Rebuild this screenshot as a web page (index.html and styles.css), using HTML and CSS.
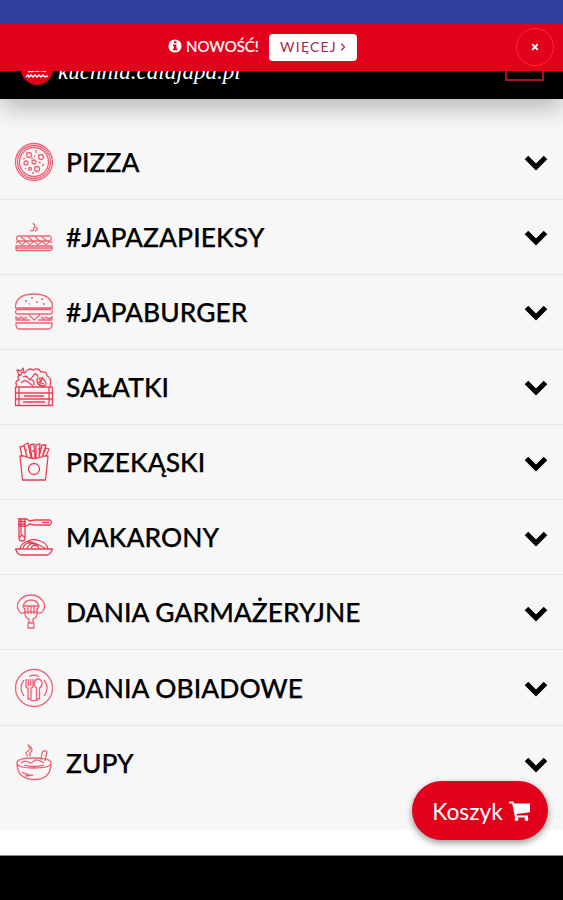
FILE: index.html
```html
<!DOCTYPE html>
<html lang="pl">
<head>
<meta charset="utf-8">
<title>Menu</title>
<link rel="stylesheet" href="styles.css">
</head>
<body>
<div class="status"></div>
<div class="notice">
  <svg class="info" viewBox="0 0 14 14"><circle cx="7" cy="7" r="6.6" fill="#fff"/><path d="M6 2.3h2.4v2H6zM5 5.4h3.4v4.2h1v1.7H4.900V9.600h1V7.100H5z" fill="#e2001a"/></svg>
  <span class="news">NOWOŚĆ!</span>
  <a class="more">WIĘCEJ <svg viewBox="0 0 6 8"><path d="M1.300 .8 4.600 4 1.300 7.200"/></svg></a>
  <span class="close"><svg viewBox="0 0 8 8"><path d="M1.200 1.200 6.800 6.800M6.800 1.200 1.200 6.800"/></svg></span>
</div>
<header class="header">
  <svg class="logo" viewBox="0 0 32 32"><circle cx="16" cy="16" r="16"/><path d="M7 18.500h5l2-1 2 1 3-1 6 1M5 24l2-2 1 2 2-2 2 2 2-2 2 2 2-2 2 2 2-2 2 2 3-1" stroke-width="1.500"/></svg>
  <span class="brand">kuchnia.calajapa.pl</span>
  <span class="burger"></span>
</header>
<main class="menu">
  <div class="row"><svg class="icon" viewBox="0 0 40 40"><circle cx="20" cy="20" r="18.500"/><circle cx="20" cy="20" r="16.500"/><circle cx="20" cy="20" r="14.500"/><circle cx="15" cy="13" r="2.500"/><circle cx="27" cy="15" r="2.500"/><circle cx="20" cy="20" r="2"/><circle cx="12" cy="21" r="2"/><circle cx="23" cy="27" r="2.500"/><circle cx="16" cy="27" r="1.500"/><path d="M22 8v3M9 17l2-1M17 17l2-1M24 20l3 1M30 22l-2 2M18 31h2M20 14l1 1M11 26l1 1"/></svg><span>PIZZA</span><svg class="chev" viewBox="0 0 26 18"><path d="M3.500 3.500l9.500 9.500 9.500-9.500"/></svg></div>
  <div class="row"><svg class="icon" viewBox="0 0 40 40"><path d="M4 19h32q2.500 2 0 5H4q-3-3 0-5zM2 26q2-3 4 0t4 0 4 0 4 0 4 0 4 0 4 0 4 0 4 0M2 29h36v3q0 1.500-2 1.500H4q-2 0-2-1.500zM2 31h36M7 20l5 4M14 20l5 4M21 20l5 4M28 20l5 4M16 13q3 2 4-1M19 6q4 4 0 6M22 10q3 2-1 4"/></svg><span>#JAPAZAPIEKSY</span><svg class="chev" viewBox="0 0 26 18"><path d="M3.500 3.500l9.500 9.500 9.500-9.500"/></svg></div>
  <div class="row"><svg class="icon" viewBox="0 0 40 40"><path d="M1.500 16C1 7 8 2 20 2s19 5 18.500 14zM3 17.500h34q3 2 0 4.500H3q-3-2 0-4.500zM2 25q2 3 5 0 3 3 6 0M15 23l5 5 6-5M27 25q3 3 5 0 3 3 6 0M2 24v4h14M24 28h14v-4M2 31h36v2q0 4-4 4H6q-4 0-4-4zM11 9h2M17 6h2M22 10h2M27 7h2M15 12h1M29 12h2"/></svg><span>#JAPABURGER</span><svg class="chev" viewBox="0 0 26 18"><path d="M3.500 3.500l9.500 9.500 9.500-9.500"/></svg></div>
  <div class="row"><svg class="icon strong" viewBox="0 0 40 40"><path d="M1.500 20h37v18.500h-37zM1.500 26h37M1.500 32h37M5 20v18M35 20v18M3 19q-3-5 2-6-3-5 2-5 0-4 4-2 3-6 8-3 5-3 8 2 6-1 6 4 5 2 3 10M5 8L3 3l4 1 2-3 1 4M9 10q3-2 5 1t5-2 5 1M7 16q3-4 7-1t5 4M15 13q5-2 5 5M23 12q5-3 8 2t-3 5q-5-1-5-5zM26 12v7M24 15l6 2M29 10l-4 8M10 29h20M9 35h22"/></svg><span>SAŁATKI</span><svg class="chev" viewBox="0 0 26 18"><path d="M3.500 3.500l9.500 9.500 9.500-9.500"/></svg></div>
  <div class="row"><svg class="icon strong" viewBox="0 0 40 40"><path d="M6 14h4q10 5 20 0h4l-2.500 24h-23zM8 14L6 5l4-1 3 11M13 15L10 3l4-2 3 15M18 16L16 3l4-1 1 14M22 16V3l4-1-1 13M25 15l3-12h4l-4 12M29 13l3-7 3 1-3 7M12 8h1M18 9h2M24 7h1"/><circle cx="20" cy="27" r="5.500"/></svg><span>PRZEKĄSKI</span><svg class="chev" viewBox="0 0 26 18"><path d="M3.500 3.500l9.500 9.500 9.500-9.500"/></svg></div>
  <div class="row"><svg class="icon strong" viewBox="0 0 40 40"><path d="M4 2h8q2 0 3 2l6-1h15q3 2.500 0 5H21l-6-1q-1 2-3 2H4M4 4.500h8M4 7h8M5 1v20q0 3 3 3t3-3l-3-3-3 3M7 1v17M11 1v20M1.500 32h37q-2 6-6 6h-25q-4 0-6-6zM6 32q1-6 8-8 6-3 12 0 7 2 8 8M9 31q2-6 8-5t8 5M13 31q4-7 10-4t8 4M17 31q2-4 7-2M14 25q5-1 8 3M28 5.500h7"/></svg><span>MAKARONY</span><svg class="chev" viewBox="0 0 26 18"><path d="M3.500 3.500l9.500 9.500 9.500-9.500"/></svg></div>
  <div class="row"><svg class="icon" viewBox="0 0 40 40"><path d="M7 21q-5-4-3-10Q8 3 17 3t13 8q2 6-3 10-4 1-4-3l2-4Q23 8 17 8T9 14l2 4q0 4-4 3zM10 14h14M11 16v5q0 5 4 6v4h-1v5h6v-5h-1v-4q4-1 4-6v-5M14 14v8M17 14v8M20 14v8M15 31h4M10 20h14"/></svg><span>DANIA GARMAŻERYJNE</span><svg class="chev" viewBox="0 0 26 18"><path d="M3.500 3.500l9.500 9.500 9.500-9.500"/></svg></div>
  <div class="row"><svg class="icon" viewBox="0 0 40 40"><circle cx="20" cy="20" r="18.500"/><path d="M15 8.500Q20 6 25 8.500M10 12Q4 20 10 28M30 12q6 8 0 16M16 32q4 1.500 8 0M12 11v7q0 2 2 2v11h3V20q2 0 2-2v-7M14.300 11v7M16.700 11v7M22.500 20v11h3V20q3-2 2.500-5-1-4-4-4t-4 4q0 3 2.500 5z"/></svg><span>DANIA OBIADOWE</span><svg class="chev" viewBox="0 0 26 18"><path d="M3.500 3.500l9.500 9.500 9.500-9.500"/></svg></div>
  <div class="row"><svg class="icon" viewBox="0 0 40 40"><path d="M3 20q0-5 17-5t17 5-17 5-17-5q0 15 15 16.500h5Q37 35 37 20M7 20q3-3 7-1t6-1 10 2M27 17l1-7q2-4 5-1l-2 9M14 13q-4-3 0-5t0-6q6 4 3 7t0 4M8 29q4 3 7 2M11 33l8-1M10 22q10 3 20 0"/></svg><span>ZUPY</span><svg class="chev" viewBox="0 0 26 18"><path d="M3.500 3.500l9.500 9.500 9.500-9.500"/></svg></div>
</main>
<footer class="footer"></footer>
<a class="cart">Koszyk <svg viewBox="0 0 22 20"><path d="M0 .5h4.500l.6 2H21v8.800L7.500 13l.4 1.500H19v2H6L3.200 2.500H0z"/><circle cx="7.500" cy="18" r="1.900"/><circle cx="17.500" cy="18" r="1.900"/></svg></a>
</body>
</html>
```
FILE: styles.css
```css
* { box-sizing: border-box; }
body { margin: 0; height: 900px; overflow: hidden; display: flex; flex-direction: column; background: #fff; font-family: Lato, sans-serif; color: #000; }
.status { height: 23.500px; flex: none; background: #2e3f9e; }
.notice { height: 47px; flex: none; background: #e2001a; color: #fff; display: flex; align-items: center; padding: 0 9px 0 168px; position: relative; z-index: 2; }
.info { width: 14px; height: 14px; margin: -2px 4px 0 0; }
.news { font-size: 15px; width: 79px; white-space: nowrap; margin-top: -2px; -webkit-text-stroke: .2px #fff; }
.more { height: 27px; width: 88px; margin-left: 4px; padding-bottom: 1px; border-radius: 4px; background: #fff; color: #b32043; font-size: 14px; letter-spacing: 1.200px; display: flex; align-items: center; justify-content: center; gap: 3px; }
.more svg { width: 6px; height: 8px; fill: none; stroke: currentColor; stroke-width: 1.200; }
.close { margin-left: auto; width: 38px; height: 38px; border: 1px solid #ef2d38; border-radius: 50%; display: flex; align-items: center; justify-content: center; }
.close svg { width: 8px; height: 8px; fill: none; stroke: #fff; stroke-width: 1.900; }
.header { height: 28px; flex: none; background: #000; display: flex; align-items: flex-end; padding: 0 19px 14px 21px; box-shadow: 0 5px 28px rgba(0,0,0,.35); position: relative; z-index: 1; }
.logo { width: 32px; height: 32px; fill: #e2001a; flex: none; }
.logo path { fill: none; stroke: #fff; }
.brand { margin: 0 0 1px 5px; color: #fff; font: italic 23px/25px "Liberation Serif", serif; letter-spacing: 0; white-space: nowrap; }
.burger { margin: 0 0 4px auto; width: 39px; height: 34px; border: 2px solid #a3122b; }
.menu { height: 731.500px; flex: none; background: #f7f7f7; padding-top: 26px; }
.row { height: 75.150px; display: flex; align-items: center; padding: 0 14px; border-bottom: 1px solid #e7e7e7; font-size: 26.400px; font-weight: 500; -webkit-text-stroke: .25px #000; letter-spacing: .05px; }
.row:last-child { border: 0; }
.icon { width: 40px; height: 40px; margin-right: 12px; fill: none; stroke: #ef6276; stroke-width: 1.300; stroke-linejoin: round; }
.strong { stroke: #ea3f57; }
.chev { width: 26px; height: 18px; margin: 3px 0 0 auto; fill: none; stroke: #000; stroke-width: 5; }
.footer { margin-top: auto; height: 45px; background: #000; border-top: 1px solid #888; }
.cart { position: absolute; left: 412px; top: 781px; width: 136px; height: 59px; padding-left: 3px; border-radius: 30px; background: #e2001a; color: #fff; font-size: 22.800px; display: flex; align-items: center; justify-content: center; gap: 6px; box-shadow: 0 3px 7px rgba(0,0,0,.4); }
.cart svg { width: 22px; height: 20px; fill: #fff; }
```
